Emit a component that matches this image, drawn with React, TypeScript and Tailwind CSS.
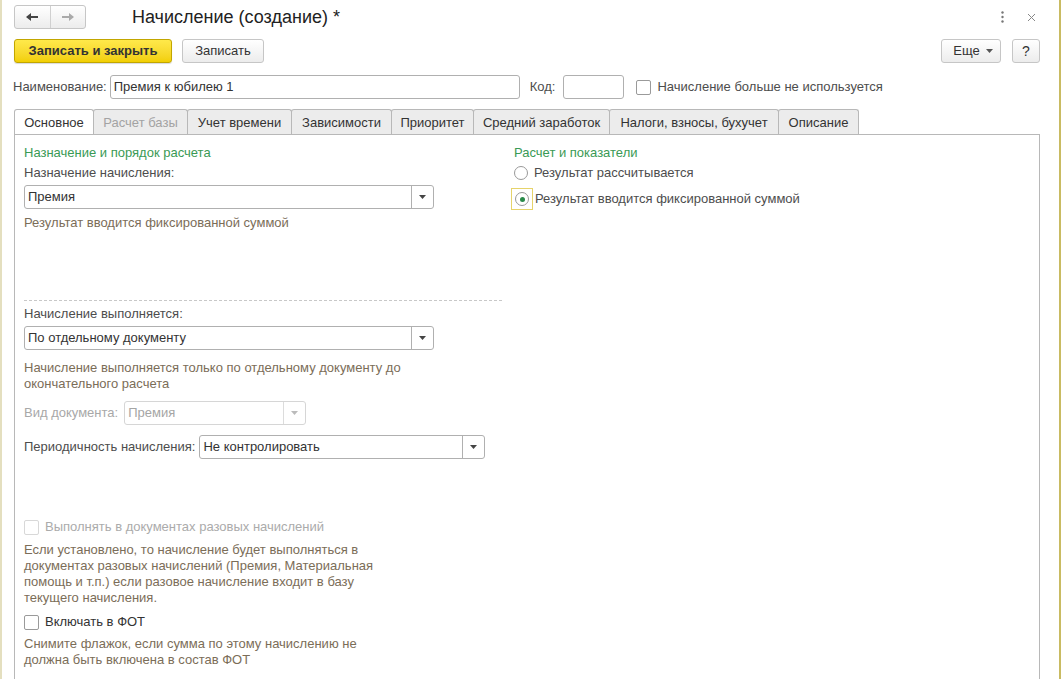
import React from 'react';

const font = { fontFamily: '"Liberation Sans", Arial, sans-serif' };

function Arrow({ dir, color }: { dir: 'left' | 'right'; color: string }) {
  return (
    <svg width="14" height="10" viewBox="0 0 14 10">
      {dir === 'left' ? (
        <path d="M1 5 L6 1 L6 4 L13 4 L13 6 L6 6 L6 9 Z" fill={color} />
      ) : (
        <path d="M13 5 L8 1 L8 4 L1 4 L1 6 L8 6 L8 9 Z" fill={color} />
      )}
    </svg>
  );
}

function Caret({ color = '#444' }: { color?: string }) {
  return (
    <svg width="7" height="4" viewBox="0 0 7 4">
      <path d="M0 0 L7 0 L3.5 4 Z" fill={color} />
    </svg>
  );
}

function Select({
  value,
  className,
  disabled,
}: {
  value: string;
  className: string;
  disabled?: boolean;
}) {
  return (
    <div
      className={`flex h-6 rounded-[3px] border bg-white ${
        disabled ? 'border-[#d6d6d6] text-[#a5a5a5]' : 'border-[#b0b0b0] text-[#333]'
      } ${className}`}
    >
      <div className="flex flex-1 items-center pl-[3px] text-[13px]">{value}</div>
      <div
        className={`flex w-[22px] items-center justify-center border-l ${
          disabled ? 'border-[#dcdcdc]' : 'border-[#b0b0b0]'
        }`}
      >
        <Caret color={disabled ? '#bbb' : '#444'} />
      </div>
    </div>
  );
}

function Checkbox({ disabled }: { disabled?: boolean }) {
  return (
    <div
      className={`h-[15px] w-[15px] rounded-[2px] border bg-white ${
        disabled ? 'border-[#d8d8d8]' : 'border-[#9a9a9a]'
      }`}
    />
  );
}

const tabs = [
  { name: 'Основное', w: 'w-[80px]', active: true },
  { name: 'Расчет базы', w: 'w-[95px]', disabled: true },
  { name: 'Учет времени', w: 'w-[105px]' },
  { name: 'Зависимости', w: 'w-[101px]' },
  { name: 'Приоритет', w: 'w-[83px]' },
  { name: 'Средний заработок', w: 'w-[137px]' },
  { name: 'Налоги, взносы, бухучет', w: 'w-[170px]' },
  { name: 'Описание', w: 'w-[81px]' },
];

export default function App() {
  return (
    <div
      style={font}
      className="relative h-[679px] w-[1061px] overflow-hidden border-l-2 border-r-2 border-l-[#e4dfbf] border-r-[#c9bb62] bg-white text-[13px] text-[#333]"
    >
      <div className="pl-3 pr-[19px]">
        {/* Title bar */}
        <div className="flex h-[29px] items-end">
          <div className="flex h-6 w-[72px] overflow-hidden rounded-[3px] border border-[#c6c6c6] bg-gradient-to-b from-white to-[#ececec]">
            <div className="flex flex-1 items-center justify-center border-r border-[#d0d0d0]">
              <Arrow dir="left" color="#444" />
            </div>
            <div className="flex flex-1 items-center justify-center">
              <Arrow dir="right" color="#aaa" />
            </div>
          </div>
          <div className="ml-[46px] flex h-6 items-center text-[18px] text-[#222]">
            Начисление (создание) *
          </div>
          <div className="ml-auto flex h-6 items-center gap-[23px] pr-1 text-[#888]">
            <svg width="3" height="12" viewBox="0 0 3 12">
              <circle cx="1.5" cy="1.5" r="1.2" fill="#777" />
              <circle cx="1.5" cy="6" r="1.2" fill="#777" />
              <circle cx="1.5" cy="10.5" r="1.2" fill="#777" />
            </svg>
            <svg width="9" height="9" viewBox="0 0 9 9">
              <path d="M1 1 L8 8 M8 1 L1 8" stroke="#888" strokeWidth="1" />
            </svg>
          </div>
        </div>

        {/* Command bar */}
        <div className="mt-[10px] flex h-6 items-center">
          <button className="flex h-6 w-[158px] items-center justify-center rounded-[3px] border border-[#c2a600] bg-gradient-to-b from-[#ffe94a] to-[#f2cf00] text-[13px] font-bold text-[#333] shadow-[0_1px_1px_rgba(0,0,0,0.15)]">
            Записать и закрыть
          </button>
          <button className="ml-[10px] flex h-6 w-[82px] items-center justify-center rounded-[3px] border border-[#c6c6c6] bg-gradient-to-b from-white to-[#ececec] text-[13px] text-[#333]">
            Записать
          </button>
          <button className="ml-auto flex h-6 w-[60px] items-center justify-center gap-[6px] rounded-[3px] border border-[#c6c6c6] bg-gradient-to-b from-white to-[#ececec] pl-1 text-[13px] text-[#333]">
            Еще <Caret color="#555" />
          </button>
          <button className="ml-[11px] flex h-6 w-[28px] items-center justify-center rounded-[3px] border border-[#c6c6c6] bg-gradient-to-b from-white to-[#ececec] text-[14px] text-[#333]">
            ?
          </button>
        </div>

        {/* Name row */}
        <div className="mt-3 flex h-6 items-center">
          <span className="-ml-px text-[#4d4d4d]">Наименование:</span>
          <div className="ml-[3px] flex h-6 w-[410px] items-center rounded-[3px] border border-[#b0b0b0] pl-[3px]">
            Премия к юбилею 1
          </div>
          <span className="ml-[10px] text-[#4d4d4d]">Код:</span>
          <div className="ml-[8px] h-6 w-[61px] rounded-[3px] border border-[#b0b0b0]" />
          <div className="ml-[12px]">
            <Checkbox />
          </div>
          <span className="ml-[6px] text-[#4d4d4d]">Начисление больше не используется</span>
        </div>

        {/* Tabs */}
        <div className="mt-[10px] flex h-[25px] items-end">
          {tabs.map((t) => (
            <div
              key={t.name}
              className={`-mr-px flex h-[25px] items-center justify-center rounded-t-[3px] border border-b-0 border-[#b8b8b8] pt-px ${t.w} ${
                t.active ? 'relative z-10 bg-white text-[#333]' : 'bg-[#ececec]'
              } ${t.disabled ? 'text-[#a3a3a3]' : 'text-[#333]'}`}
            >
              {t.name}
            </div>
          ))}
        </div>

        {/* Panel */}
        <div className="flex h-[600px] border border-b-0 border-[#b8b8b8] pl-[9px] pt-[10px]">
          {/* Left column */}
          <div className="flex w-[478px] flex-col">
            <div className="h-4 leading-4 text-[#3a9a55]">Назначение и порядок расчета</div>
            <div className="mt-1 h-4 leading-4 text-[#4d4d4d]">Назначение начисления:</div>
            <Select value="Премия" className="mt-1 w-[410px]" />
            <div className="mt-[6px] h-4 leading-4 text-[#7b6d58]">
              Результат вводится фиксированной суммой
            </div>
            <div className="mt-[69px] border-t border-dashed border-[#c8c8c8]" />
            <div className="mt-[5px] h-4 leading-4 text-[#4d4d4d]">Начисление выполняется:</div>
            <Select value="По отдельному документу" className="mt-1 w-[410px]" />
            <div className="mt-[10px] leading-4 text-[#7b6d58]">
              Начисление выполняется только по отдельному документу до
              <br />
              окончательного расчета
            </div>
            <div className="mt-[9px] flex h-6 items-center">
              <span className="text-[#a8a8a8]">Вид документа:</span>
              <Select value="Премия" disabled className="ml-[6px] w-[182px]" />
            </div>
            <div className="mt-[10px] flex h-6 items-center">
              <span className="text-[#4d4d4d]">Периодичность начисления:</span>
              <Select value="Не контролировать" className="ml-[4px] w-[286px]" />
            </div>
            <div className="mt-[60px] flex h-4 items-center gap-[6px]">
              <Checkbox disabled />
              <span className="text-[#ababab]">Выполнять в документах разовых начислений</span>
            </div>
            <div className="mt-[7px] leading-4 text-[#7b6d58]">
              Если установлено, то начисление будет выполняться в
              <br />
              документах разовых начислений (Премия, Материальная
              <br />
              помощь и т.п.) если разовое начисление входит в базу
              <br />
              текущего начисления.
            </div>
            <div className="mt-2 flex h-4 items-center gap-[6px]">
              <Checkbox />
              <span className="text-[#333]">Включать в ФОТ</span>
            </div>
            <div className="mt-[6px] leading-4 text-[#7b6d58]">
              Снимите флажок, если сумма по этому начислению не
              <br />
              должна быть включена в состав ФОТ
            </div>
          </div>

          {/* Right column */}
          <div className="ml-3 flex flex-col">
            <div className="h-4 leading-4 text-[#3a9a55]">Расчет и показатели</div>
            <div className="mt-1 flex h-4 items-center gap-[6px]">
              <div className="h-[14px] w-[14px] rounded-full border border-[#999] bg-white" />
              <span className="text-[#4d4d4d]">Результат рассчитывается</span>
            </div>
            <div className="-ml-[3px] mt-[7px] flex h-[22px] items-center">
              <div className="flex h-[22px] w-[22px] items-center justify-center border border-[#e6d36a]">
                <div className="flex h-[14px] w-[14px] items-center justify-center rounded-full border border-[#999] bg-white">
                  <div className="h-[5px] w-[5px] rounded-full bg-[#2a8a4a]" />
                </div>
              </div>
              <span className="ml-[2px] text-[#4d4d4d]">Результат вводится фиксированной суммой</span>
            </div>
          </div>
        </div>
      </div>
    </div>
  );
}
